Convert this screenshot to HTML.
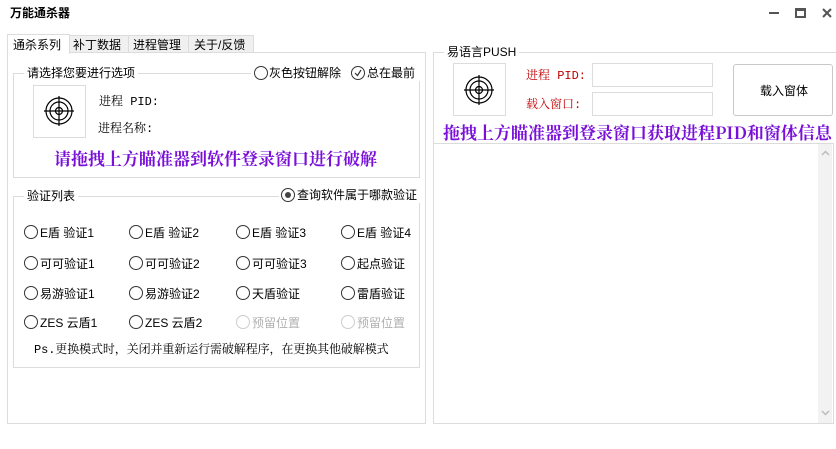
<!DOCTYPE html><html><head><meta charset="utf-8"><style>
body{margin:0;width:836px;height:449px;background:#fff;position:relative;overflow:hidden;font-family:"Liberation Sans","Noto Sans CJK SC",sans-serif;font-size:12px;color:#000}
.a{position:absolute;white-space:nowrap}
.b{position:absolute;border:1px solid #dcdcdc;box-sizing:border-box}
.t{position:absolute;background:#fff;padding:0 3px;white-space:nowrap;line-height:16px}
.r{position:absolute;width:14px;height:14px;border:1px solid #333;border-radius:50%;box-sizing:border-box;background:#fff}
.rl{position:absolute;white-space:nowrap;font-size:12px}
.p{color:#7a10d8;font-weight:bold;font-size:17px;font-family:"Noto Serif CJK SC",serif}
.mono{font-family:"Liberation Mono","Noto Serif CJK SC",monospace}
</style></head><body>
<div class="a" style="left:10px;top:4px;font-weight:bold;font-size:12px">万能通杀器</div>
<div class="a" style="left:769px;top:12px;width:10px;height:2px;background:#555"></div>
<div class="b" style="left:795px;top:8px;width:11px;height:10px;border:2px solid #555;border-top-width:3px"></div>
<svg class="a" style="left:822px;top:8px" width="10" height="10"><path d="M1 1L9 9M9 1L1 9" stroke="#555" stroke-width="2"/></svg>
<!-- tabs -->
<div class="b" style="left:7px;top:52px;width:419px;height:372px"></div>
<div class="b" style="left:69px;top:35px;width:60px;height:18px;background:#f0f0f0"></div>
<div class="b" style="left:128px;top:35px;width:61px;height:18px;background:#f0f0f0"></div>
<div class="b" style="left:188px;top:35px;width:66px;height:18px;background:#f0f0f0"></div>
<div class="b" style="left:7px;top:34px;width:63px;height:20px;border-bottom:none;background:#fff"></div>
<div class="a" style="left:13px;top:36px">通杀系列</div>
<div class="a" style="left:73px;top:36px">补丁数据</div>
<div class="a" style="left:133px;top:36px">进程管理</div>
<div class="a" style="left:194px;top:36px">关于/反馈</div>
<!-- group1 -->
<div class="b" style="left:13px;top:73px;width:407px;height:105px"></div>
<div class="t" style="left:24px;top:65px">请选择您要进行选项</div>
<div class="t" style="left:251px;top:65px;width:92px;height:16px"></div>
<div class="r" style="left:254px;top:66px"></div>
<div class="a" style="left:269px;top:65px;line-height:16px">灰色按钮解除</div>
<div class="t" style="left:348px;top:65px;width:70px;height:16px"></div>
<div class="r" style="left:351px;top:66px"></div>
<svg class="a" style="left:354px;top:69px" width="8" height="8"><path d="M1 4L3.5 6.5L7 1" stroke="#333" stroke-width="1.2" fill="none"/></svg>
<div class="a" style="left:367px;top:65px;line-height:16px">总在最前</div>
<div class="b" style="left:33px;top:85px;width:53px;height:53px"></div>
<svg class="a" style="left:43px;top:95px" width="32" height="32" viewBox="0 0 32 32" fill="none" stroke="#000" stroke-width="1.2"><circle cx="16" cy="16" r="13"/><circle cx="16" cy="16" r="9"/><circle cx="16" cy="16" r="3.5"/><path d="M16 1v30M1 16h30"/></svg>
<div class="a mono" style="left:99px;top:92px">进程 PID:</div>
<div class="a mono" style="left:98px;top:119px">进程名称:</div>
<div class="a p" style="left:54px;top:145px">请拖拽上方瞄准器到软件登录窗口进行破解</div>
<!-- group2 -->
<div class="b" style="left:13px;top:196px;width:407px;height:172px"></div>
<div class="t" style="left:24px;top:188px">验证列表</div>
<div class="t" style="left:279px;top:187px;width:140px;height:16px"></div>
<div class="r" style="left:281px;top:188px"></div>
<div class="a" style="left:285px;top:192px;width:6px;height:6px;border-radius:50%;background:#444"></div>
<div class="a" style="left:297px;top:187px;line-height:16px">查询软件属于哪款验证</div>
<div id="g"></div>
<div class="a mono" style="left:34px;top:340px;font-size:12px;letter-spacing:-0.1px">Ps.更换模式时，关闭并重新运行需破解程序，在更换其他破解模式</div>
<!-- right -->
<div class="b" style="left:433px;top:52px;width:410px;height:100px;border-bottom:none;border-right:none"></div>
<div class="t" style="left:444px;top:44px">易语言PUSH</div>
<div class="b" style="left:453px;top:63px;width:53px;height:53px"></div>
<svg class="a" style="left:463px;top:74px" width="32" height="32" viewBox="0 0 32 32" fill="none" stroke="#000" stroke-width="1.2"><circle cx="16" cy="16" r="13"/><circle cx="16" cy="16" r="9"/><circle cx="16" cy="16" r="3.5"/><path d="M16 1v30M1 16h30"/></svg>
<div class="a mono" style="left:526px;top:66px;color:#c00000">进程 PID:</div>
<div class="a mono" style="left:526px;top:95px;color:#c00000">载入窗口:</div>
<div class="b" style="left:592px;top:63px;width:121px;height:24px"></div>
<div class="b" style="left:592px;top:92px;width:121px;height:24px"></div>
<div class="b" style="left:733px;top:64px;width:100px;height:52px;border-radius:3px;border-color:#c8c8c8"></div>
<div class="a" style="left:760px;top:82px">载入窗体</div>
<div class="a p" style="left:443px;top:119px">拖拽上方瞄准器到登录窗口获取进程PID和窗体信息</div>
<div class="b" style="left:433px;top:143px;width:401px;height:281px"></div>
<div class="a" style="left:818px;top:144px;width:14px;height:279px;background:#f2f2f2"></div>
<svg class="a" style="left:821px;top:150px" width="9" height="6"><path d="M1 5L4.5 1.5L8 5" stroke="#bbb" stroke-width="1.5" fill="none"/></svg>
<svg class="a" style="left:821px;top:410px" width="9" height="6"><path d="M1 1L4.5 4.5L8 1" stroke="#bbb" stroke-width="1.5" fill="none"/></svg>
<script>
var L=[["E盾 验证1","E盾 验证2","E盾 验证3","E盾 验证4"],["可可验证1","可可验证2","可可验证3","起点验证"],["易游验证1","易游验证2","天盾验证","雷盾验证"],["ZES 云盾1","ZES 云盾2","预留位置","预留位置"]];
var xs=[24,129,236,341],ys=[224,255,285,314],h="";
for(var i=0;i<4;i++)for(var j=0;j<4;j++){var d=(i==3&&j>1);
h+='<div class="r" style="left:'+xs[j]+'px;top:'+(ys[i]+1)+'px;'+(d?'border-color:#ccc':'')+'"></div><div class="rl" style="left:'+(xs[j]+16)+'px;top:'+(ys[i])+'px;'+(d?'color:#b0b0b0':'')+'">'+L[i][j]+'</div>';}
document.getElementById('g').innerHTML=h;
</script>
</body></html>
